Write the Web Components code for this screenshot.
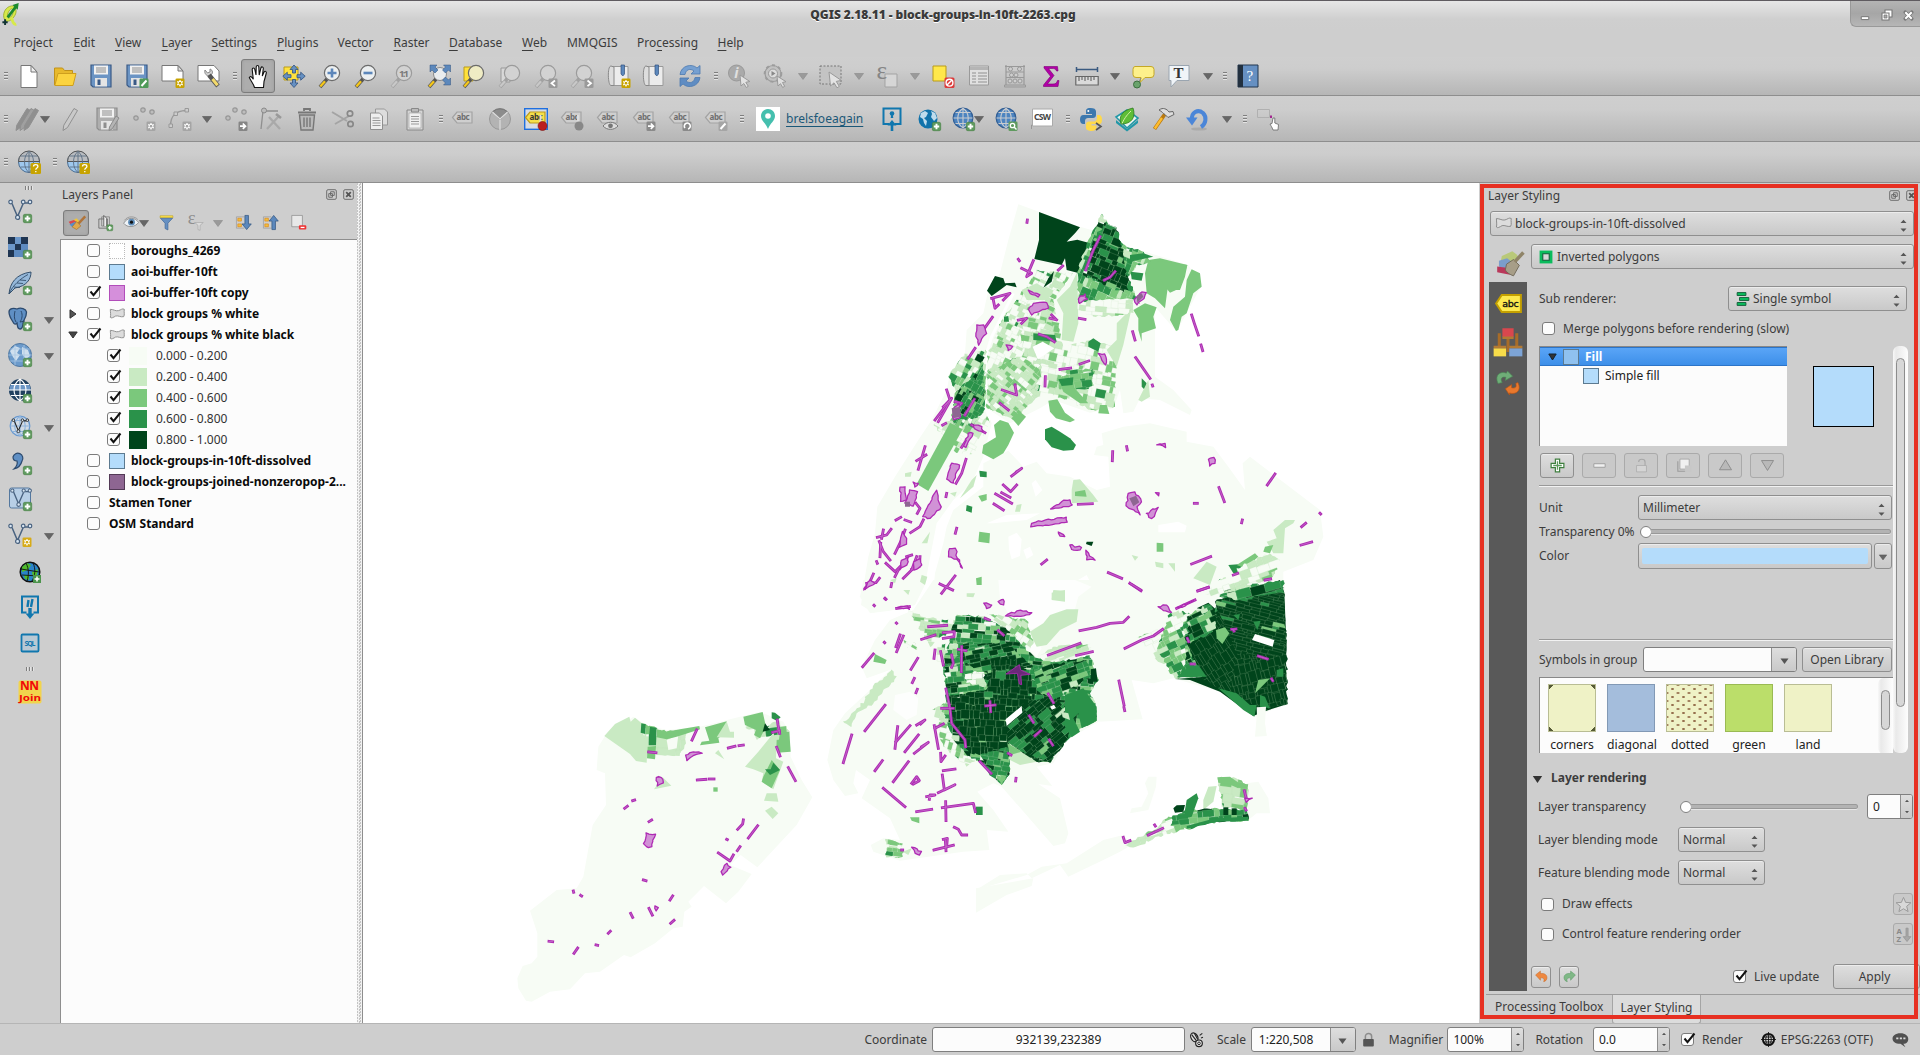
<!DOCTYPE html>
<html lang="en">
<head>
<meta charset="utf-8">
<title>QGIS 2.18.11 - block-groups-in-10ft-2263.cpg</title>
<style>
html,body{margin:0;height:100%;overflow:hidden;background:#cecece}
</style>
</head>
<body>
<qgis-app></qgis-app>
<script>
function define(name, css, html, after) {
  customElements.define(name, class extends HTMLElement {
    connectedCallback() {
      if (this.shadowRoot) return;
      const root = this.attachShadow({ mode: 'open' });
      root.innerHTML = `<style>*{box-sizing:border-box}:host{box-sizing:border-box}${css}</style>` + html(this);
      if (after) after(this, root);
    }
  });
}

/* ---------- icons, on a 24 x 24 grid ---------- */
const plus = `<rect x="15.3" y="15.3" width="8.4" height="8.4" rx="1.5" fill="#5f9a5f" stroke="#43803f" stroke-width=".6"/><path d="M19.5 16.8v5.4M16.8 19.5h5.4" stroke="#fff" stroke-width="1.9"/>`;
const badge = (c, d) => `<rect x="14.5" y="14.5" width="9" height="9.5" rx="1.3" fill="${c}"/>${d}`;
const sun = c => badge(c, `<path d="M19 16v6.5M16.2 17.6l5.6 3.3M21.8 17.6l-5.6 3.3" stroke="#fff" stroke-width="1.2"/><circle cx="19" cy="19.2" r="1.9" fill="${c}" stroke="#fff"/>`);
const lens = (inner, g) => `<path d="M2 23L9 15" stroke="${g ? '#a2a2a2' : '#555'}" stroke-width="3.6"/><path d="M2.3 22.6L7 17.2" stroke="${g ? '#c8c8c8' : '#f5c71a'}" stroke-width="2.3"/><circle cx="14" cy="9" r="7.6" fill="${g ? '#d2d2d2' : '#eceff0'}" stroke="${g ? '#9b9b9b' : '#6b6b6b'}" stroke-width="1.2"/>${inner}`;
const vec = c => `<path d="M4 4.5L9.5 17.5L15 5M17 4h4" stroke="${c}" stroke-width="1.5"/><g fill="#d9e6f2" stroke="${c}" stroke-width="1.2"><circle cx="2.6" cy="3" r="1.8"/><circle cx="15.2" cy="3" r="1.8"/><circle cx="22" cy="3" r="1.8"/><circle cx="9.6" cy="18.4" r="2"/></g>`;
const tag = (extra, fill = '#cfcfcf', st = '#a3a3a3', tx = '#6e6e6e') => `<path d="M1.5 10.500L6 5h15v11H6z" fill="${fill}" stroke="${st}" stroke-width="1.2"/><text x="5.600" y="13.400" font-size="8" font-weight="700" fill="${tx}" textLength="13">abc</text>${extra}`;
const globe = (extra, st = '#44607c', a = '#b7cfe6', b = '#e4edf5') => `<circle cx="12" cy="11" r="9.8" fill="${a}" stroke="${st}" stroke-width="1.3"/><path d="M2.500 11h19M4.500 5.500h15M4.500 16.500h15M12 1.200v19.600M12 1.200c-7 5-7 15 0 19.600M12 1.200c7 5 7 15 0 19.600" stroke="${b}" stroke-width="1.100"/>${extra}`;
const qglobe = `<circle cx="11" cy="12" r="10.500" fill="#9ec8ee" stroke="#4a6d92"/><path d="M.5 11.500a10.500 10.500 0 0 1 21 0z" fill="#b9bcc0" stroke="#555"/><path d="M2.500 6h17M2.500 17h17M11 1.500v21M11 1.500c-6 4-6 17 0 21M11 1.500c6 4 6 17 0 21" stroke="#5c6f84" stroke-width=".9"/>` + `<rect x="12.500" y="13" width="10.500" height="11" rx="1.500" fill="#c7a300"/><path d="M15.500 16.500c0-2.400 4.400-2.400 4.400 0 0 1.600-2.100 1.400-2.100 3.200m0 1.200v1.400" stroke="#fff" stroke-width="1.300"/>`;
const pencil = (g, x = 0) => `<path d="M${15 + x} 1.500l3.500 2L${8.500 + x} 20.500l-4.500 3 .8-5.300z" fill="${g}" stroke="#909090"/>`;
const dots = `<g fill="#bdbdbd" stroke="#979797" stroke-width="1.200"><circle cx="11" cy="3" r="2.200"/><circle cx="20" cy="5" r="2.200"/><circle cx="4" cy="11" r="2.200"/></g>`;
const save = (c, l) => `<path d="M2 1h20v22H4l-2-2z" fill="${c}" stroke="${l}" stroke-width="1.200"/><path d="M5 1.500h14v9H5z" fill="#f1f1f1"/><path d="M7 4h10M7 6h10M7 8h10" stroke="#8d8d8d"/><path d="M6 14h12v8.500H6z" fill="#e4e4e4"/><path d="M8.500 15.500h3v5.500h-3z" fill="${l}"/>`;
const arrowD = c => `<path d="M7.500 9.500h9L12 15.500z" fill="${c}" stroke="#555" stroke-width=".6"/>`;
const ICONS = {
  grip: `<path d="M10 8.500h4M10 11.500h4M10 14.500h4" stroke="#7e7e7e"/><path d="M10 9.500h4M10 12.500h4M10 15.500h4" stroke="#e4e4e4"/>`,
  vgrip: `<path d="M8.500 10v4M11.500 10v4M14.500 10v4" stroke="#7e7e7e"/><path d="M9.500 10v4M12.500 10v4M15.500 10v4" stroke="#e4e4e4"/>`,
  dd: arrowD('#666'), ddg: `<path d="M7.500 9.500h9L12 15.500z" fill="#9a9a9a" stroke="#8a8a8a" stroke-width=".6"/>`,
  new: `<path d="M4 1.500h10L20 8v15.500H4z" fill="#fff" stroke="#777"/><path d="M14 1.500V8h6z" fill="#eee" stroke="#777"/>`,
  open: `<path d="M1.500 21V4h8l2 2.500h8V10" fill="#e8b92c" stroke="#c0921a"/><path d="M1.800 21.500L5 9.500h18L20 21.500z" fill="#fbd33f" stroke="#cf9f1d"/>`,
  save: save('#6b94c4', '#3a5a86'),
  saveas: save('#6b94c4', '#3a5a86') + badge('#4f9a58', `<path d="M16.500 22l5-5.500" stroke="#fff" stroke-width="2"/>`),
  newprint: `<path d="M1 1.500h16L22 7v10H1z" fill="#fff" stroke="#777"/><path d="M17 1.500V7h5z" fill="#ddd" stroke="#777"/>` + sun('#c7a300'),
  composer: `<path d="M1 1.500h16L22 7v10H1z" fill="#fff" stroke="#777"/><path d="M8 6l2.500 3 2.500-1V5c3 1 3.500 5 0 6.500-3.500 1-6-2-5-5.500z" fill="#d5d5d5" stroke="#888"/><path d="M12 11l9 11" stroke="#555" stroke-width="4.500"/><path d="M15.500 15l5 6.300" stroke="#f2d96b" stroke-width="3"/>`,
  pan: `<path d="M8.500 23.500c-1-4-4-7-5.200-10 .9-1.800 2.600-.5 4 1.700L6.200 5.500c0-2 2.200-2 2.600 0L10 11l.2-8c.2-2 2.500-2 2.600 0l.4 8 1.700-7c.6-1.800 2.600-1.200 2.400.6L16.300 12l1.800-4c.9-1.400 2.500-.6 2.200 1-1 4-1.500 6-2.300 8.500L17.500 23.500z" fill="#fff" stroke="#111" stroke-width="1.100"/>`,
  pansel: `<path d="M2 3h14v13H2z" fill="#ffe23f" stroke="#b99b1b"/><g fill="#6690c2" stroke="#30527f" stroke-width=".8"><path d="M12 1l4 4.500h-2.500V9h-3V5.500H8zM12 23.500l4-4.500h-2.500v-3.500h-3V19H8zM.8 12.200l4.500-4v2.500H9v3H5.300v2.500zM23.200 12.200l-4.500-4v2.500H15v3h3.700v2.500z"/></g>`,
  zin: lens(`<path d="M14 4.500v9M9.500 9h9" stroke="#5c86ba" stroke-width="2.600"/>`),
  zout: lens(`<path d="M9.500 9h9" stroke="#5c86ba" stroke-width="2.600"/>`),
  z11: lens(`<text x="9" y="12.800" font-size="9.500" font-weight="700" fill="#7a7a7a" textLength="10">1:1</text>`, 1),
  zfull: `<path d="M2 23L9 15" stroke="#555" stroke-width="3.600"/><path d="M2.300 22.600L7 17.200" stroke="#f5c71a" stroke-width="2.300"/><circle cx="13" cy="10" r="6.500" fill="#e9ecee" stroke="#8a8a8a"/><g fill="#5c88bc" stroke="#30527f" stroke-width=".5"><path d="M3 1h7L8 3l3 3-3 3-3-3-2 2zM23.500 1v7l-2-2-3 3-3-3 3-3-2-2zM23.500 21h-7l2-2-3-3 3-3 3 3 2-2z"/></g>`,
  zsel: `<path d="M2 3h9v14H2z" fill="#ffe13a" stroke="#b99b1b"/>` + lens('').replace(/#eceff0/, '#efecc4'),
  zlay: `<path d="M3 4h9v14H3z" fill="#d8d8d8" stroke="#999"/>` + lens('', 1),
  zlast: lens('', 1) + badge('#9a9a9a', `<path d="M21 16.500l-3.500 2.800 3.500 2.800" stroke="#fff" stroke-width="1.800"/>`),
  znext: lens('', 1) + badge('#9a9a9a', `<path d="M17.500 16.500l3.500 2.800-3.500 2.800" stroke="#fff" stroke-width="1.800"/>`),
  bmnew: `<path d="M4 2.500h17v19H4z" fill="#ececec" stroke="#999"/><path d="M4 2c-4 0-3 20 0 19.500h3V3z" fill="#ddd" stroke="#888"/><path d="M14 1h3.500v9l-1.700 2-1.800-2z" fill="#5c88bc" stroke="#30527f" stroke-width=".7"/>` + sun('#c7a300'),
  bm: `<path d="M4 2.500h17v19H4z" fill="#ececec" stroke="#999"/><path d="M4 2c-4 0-3 20 0 19.500h3V3z" fill="#ddd" stroke="#888"/><path d="M13 1h3.500v9l-1.700 2-1.800-2z" fill="#5c88bc" stroke="#30527f" stroke-width=".7"/>`,
  refresh: `<path d="M2 10.500C3 1.500 14-1 19 4l3-2.500v8.500h-9l3-3c-4-3-8-1.500-9 3.500z" fill="#76a0d1" stroke="#4d7ab0" stroke-width=".8"/><path d="M22 13.500c-1 9-12 11.500-17 6.500l-3 2.500V14h9l-3 3c4 3 8 1.500 9-3.500z" fill="#5f8cc2" stroke="#4d7ab0" stroke-width=".8"/>`,
  info: `<circle cx="9.500" cy="9" r="8" fill="#aaa" stroke="#999"/><text x="7.300" y="14" font-size="14" font-style="italic" font-weight="700" fill="#e0e0e0">i</text><path d="M13 11l1 11 2.800-2.500 2.500 4 2-1.200-2.500-4 4-.8z" fill="#e2e2e2" stroke="#999"/>`,
  gear: `<circle cx="10" cy="9.500" r="8" fill="#c2c2c2" stroke="#9c9c9c" stroke-width="1.200"/><circle cx="10" cy="9.500" r="8.300" stroke="#9c9c9c" stroke-width="2" stroke-dasharray="3 3.300"/><circle cx="10" cy="9.500" r="4.500" fill="#ddd" stroke="#999"/><path d="M8.500 7v5l4-2.500z" fill="#888"/><path d="M14 12l1 10 2.500-2.300 2.200 3.800 2-1.200-2.200-3.800 3.500-.8z" fill="#dedede" stroke="#999"/>`,
  select: `<path d="M1 2h21v18H1z" fill="#c3c3c3" stroke="#777" stroke-dasharray="2 1.500"/><path d="M10 8l1.500 14 3.500-3.200 3 5 2.300-1.400-3-5 5-1z" fill="#e3e3e3" stroke="#999"/>`,
  eps: `<path d="M10 10h12v13H10z" fill="#d6d6d6" stroke="#a3a3a3"/><text x="1.500" y="15" font-size="25" font-family="Liberation Serif" fill="#858585">ε</text>`,
  desel: `<path d="M2 2h13v15H2z" fill="#ffe84b" stroke="#b99b1b"/><rect x="13.500" y="13.500" width="10" height="10.500" rx="1.500" fill="#dc3b3b"/><circle cx="18.500" cy="18.700" r="3.400" stroke="#fff" stroke-width="1.400"/><path d="M16 21l5-5" stroke="#fff" stroke-width="1.400"/>`,
  table: `<path d="M2.500 2h19v19h-19z" fill="#e0e0e0" stroke="#9a9a9a"/><path d="M3 3h18v3H3z" fill="#b5b5b5"/><path d="M5 9h4M5 12h4M5 15h4M5 18h4M11 9h9M11 12h9M11 15h9M11 18h9" stroke="#aaa" stroke-width="1.600"/>`,
  abacus: `<path d="M3 1v20M21 1v20M2 2.500h20M3 8h18M3 13.500h18" stroke="#999" stroke-width="1.200"/><path d="M1.500 21h21v2h-21z" fill="#bbb" stroke="#999"/><g fill="#cfcfcf" stroke="#999"><circle cx="7.500" cy="5" r="2"/><circle cx="16.500" cy="5" r="2"/><circle cx="8.500" cy="11" r="2"/><circle cx="13" cy="11" r="2"/><circle cx="7" cy="17" r="2"/><circle cx="12" cy="17" r="2"/><circle cx="17" cy="17" r="2"/></g>`,
  sigma: `<path d="M5 2.500h13.500l.5 4.500h-1.500C17 5 15.500 4.500 13 4.500H9.500l5.500 7-6.500 8.500H14c3 0 3.700-1 4.500-3.500H20l-1 6H4.500v-1.500l7-8.700L5 4z" fill="#b100a6" stroke="#7a0073" stroke-width=".6"/>`,
  ruler: `<path d="M1.500 5.500h21M1.500 3v5M22.500 3v5" stroke="#3a5a80" stroke-width="1.500"/><path d="M.8 12.500h22.400v8.500H.8z" fill="#dadada" stroke="#666" stroke-width="1.200"/><path d="M4 13v4M7 13v3M10 13v4M13 13v3M16 13v4M19 13v3" stroke="#555"/>`,
  tip: `<path d="M4 2.500h16q3 0 3 3v5q0 3-3 3h-6l-5 5 1-5H5q-3 0-3-3v-5q0-3 2-3z" fill="#fdf08b" stroke="#c4a726"/><path d="M10 14L7 20" stroke="#888"/><circle cx="6" cy="20.500" r="3.500" fill="#6aa36c" stroke="#3c6f3f"/>`,
  textann: `<path d="M2 1.500h20v15H10l-6 6.500v-6.500H2z" fill="#f0f4f8" stroke="#9aa5b0"/><text x="6.500" y="14" font-size="15" font-family="Liberation Serif" font-weight="700" fill="#333">T</text>`,
  help: `<path d="M2 1h20v22H2z" fill="#6690c2" stroke="#23364e"/><path d="M2 1h5v22H2z" fill="#22303f"/><text x="10.500" y="17" font-size="15" font-family="Liberation Serif" fill="#fff">?</text>`,
  pencils: pencil('#8f8f8f', -4) + pencil('#a0a0a0', 0) + pencil('#8f8f8f', 4),
  pencil: pencil('#c9c9c9', 1),
  saveg: save('#aeaeae', '#8e8e8e') + `<path d="M21 9l3 2-7 11-3 1.500.5-3.500z" fill="#b5b5b5" stroke="#8b8b8b"/>`,
  dotsun: dots + sun('#a5a5a5'),
  curve: `<path d="M2.500 19C2.500 8 8 4 18 3.500" stroke="#9a9a9a" stroke-width="1.500"/><g fill="#ccc" stroke="#999"><path d="M1 17h3.500v3.500H1zM6 5h3.500v3.500H6zM17 1.500h3.500V5H17z"/></g>` + sun('#a5a5a5'),
  dotarrow: dots + badge('#858585', `<path d="M16 19.200h5M18.800 16.500l2.700 2.700-2.700 2.700" stroke="#fff" stroke-width="1.700"/>`),
  node: `<path d="M4 4L2 22M6 4h13" stroke="#8f8f8f" stroke-width="1.300"/><circle cx="5" cy="3.500" r="2.500" fill="#bbb" stroke="#888"/><path d="M8 22L20 9M10 10l11 12" stroke="#a9a9a9" stroke-width="2.300"/><path d="M17 7l5 4" stroke="#999" stroke-width="2.600"/>`,
  trash: `<path d="M4.500 8h15l-1.500 15H6z" fill="#b9b9b9" stroke="#777" stroke-width="1.400"/><path d="M3 5.500h18M9 4V2h6v2" stroke="#777" stroke-width="1.800"/><path d="M9 10.500v9.500M12 10.500v9.500M15 10.500v9.500" stroke="#777" stroke-width="1.400"/>`,
  cut: `<path d="M1 5l15 9M4 17l14-8" stroke="#a4a4a4" stroke-width="2"/><circle cx="19" cy="6.500" r="2.700" stroke="#888" stroke-width="1.700"/><circle cx="19.500" cy="17" r="2.700" stroke="#888" stroke-width="1.700"/>`,
  copy: `<path d="M8.500 2h9l3 3v13h-12z" fill="#ddd" stroke="#999"/><path d="M3.500 6h9l3 3v13.500h-12z" fill="#eee" stroke="#8f8f8f"/><path d="M5.500 11h7M5.500 13.500h8M5.500 16h8M5.500 18.500h8" stroke="#999"/>`,
  paste: `<path d="M4 3h16v20H4z" fill="#d5d5d5" stroke="#888"/><path d="M6 6h12v15H6z" fill="#f0f0f0" stroke="#aaa" stroke-width=".7"/><path d="M8.500 1.500h7V5h-7z" fill="#bbb" stroke="#888"/><path d="M8 9.500h8M8 12h8M8 14.500h8M8 17h8" stroke="#999"/>`,
  abc: tag(''),
  pie: `<circle cx="12" cy="12" r="10.500" fill="#b3b3b3" stroke="#999"/><path d="M12 13L5 4.500a10.500 10.500 0 0 1 14 0z" fill="#8c8c8c" stroke="#777"/><path d="M12 12v11M12 12L4.500 5M12 12l7.500-7" stroke="#ddd" stroke-width="1.200"/>`,
  abchl: `<rect x=".7" y="1.700" width="22.600" height="20.600" fill="#d8dce2" stroke="#1e6fe0" stroke-width="1.400"/>` + tag('', '#f5e04a', '#bd9a1d', '#333') + `<path d="M16.500 8v8" stroke="#ddd" stroke-width="2"/><circle cx="18.500" cy="19" r="4.500" fill="#bb1f1f" stroke="#7b1010" stroke-width=".6"/>`,
  abcpin: tag(`<path d="M18 8v8" stroke="#ddd" stroke-width="2"/><circle cx="19" cy="19" r="4.500" fill="#888"/>`),
  abceye: tag(`<path d="M7 19c4-5 11-5 15 0-4 4.500-11 4.500-15 0z" fill="#ddd" stroke="#777"/><circle cx="14.500" cy="18.800" r="2.400" fill="#777"/>`),
  abcmove: tag(badge('#8a8a8a', `<path d="M16 19.200h5M18.800 16.500l2.700 2.700-2.700 2.700" stroke="#fff" stroke-width="1.700"/>`)),
  abcrot: tag(badge('#8a8a8a', `<path d="M17 21a3 3 0 1 1 3 1" stroke="#fff" stroke-width="1.600"/>`)),
  abcedit: tag(badge('#a5a5a5', `<path d="M16.500 22l5-5.500" stroke="#fff" stroke-width="2"/>`)),
  pin: `<rect width="24" height="24" fill="#fff"/><path d="M12 2c4 0 7 3 7 7 0 5-5 7-7 13C10 16 5 14 5 9c0-4 3-7 7-7z" fill="#45bfae"/><circle cx="12" cy="9" r="2.800" fill="#fff"/>`,
  dl: `<path d="M9.500 17H3.500V1.500h17V17h-6" stroke="#1077ae" stroke-width="2"/><path d="M12 24v-7" stroke="#1077ae" stroke-width="2.600"/><path d="M7.500 18.500L12 13l4.500 5.500z" fill="#1077ae"/><circle cx="12" cy="6.500" r="2.300" fill="#1077ae"/><path d="M11.300 7h1.400l.6 4h-2.600z" fill="#1077ae"/>`,
  cglobe: `<circle cx="11" cy="12" r="9.500" fill="#1173ab"/><path d="M4 6l4-2 3 2-2 4-2 1 3 3-1 5-2-3-1-4-3-2zM14 4l4 2 2 5-3 3-3-4 1-3z" fill="#bfdced"/>` + plus,
  bglobe: globe(plus, '#315e94', '#4d84c0', '#c9ccd0'),
  sglobe: globe(badge('#5f9a5f', `<circle cx="18.500" cy="18.500" r="2.200" stroke="#fff" stroke-width="1.300"/><path d="M20 20l2.500 2.500" stroke="#fff" stroke-width="1.400"/>`), '#315e94', '#4d84c0', '#c9ccd0'),
  csw: `<path d="M1.500 22V18h10" stroke="#999"/><path d="M2.500 2h20v17h-20z" fill="#fff" stroke="#aaa"/><text x="4" y="13.200" font-size="8.500" font-weight="700" fill="#444" textLength="17">CSW</text>`,
  python: `<path d="M11.500 1C7 1 7 3 7 4.500V7h6v1H4.500C2 8 1 10 1 12.500S2 17 4.500 17H6v-3c0-2 1.500-3 3-3h5c1.700 0 3-1 3-3V4.500C17 2 15 1 11.500 1z" fill="#3d78ae"/><circle cx="9.300" cy="4" r="1" fill="#fff"/><path d="M18 8v3c0 2-1.500 3.500-3 3.500h-5c-1.500 0-3 1-3 3V21c0 2 3 3 5.500 3s5-1 5-3v-2.500h-5V17H20c2.500 0 3-2 3-4.500S22 8 20 8z" fill="#ffd94a"/><path d="M17 16l5 3.500-5 3.500" stroke="#555" stroke-width="1.600"/>`,
  leaf: `<path d="M1 13l11 9 11-9v3l-11 8.500L1 16z" fill="#2298a8"/><path d="M1 10l11-7 11 8-11 10z" fill="#e8f4ef" stroke="#2298a8" stroke-width="1.600"/><path d="M6 17C3 8 9 3 18 1c3 9-1 16-12 16z" fill="#5ebd37" stroke="#2f7b20" stroke-width=".8"/><path d="M7 16.500C10 10 13 7 16 4" stroke="#d8f0a8"/>`,
  hammer: `<path d="M3.500 22L14 7" stroke="#b97a10" stroke-width="3.800"/><path d="M3.800 21.500L11 11" stroke="#ffbd2e" stroke-width="2.300"/><path d="M8 3c4-3 8-1 10 2l4-.5 1 3-6 3-3-3c-2-1-3-3-6-4.500z" fill="#ddd" stroke="#666"/>`,
  undo: `<ellipse cx="13" cy="22" rx="8" ry="1.600" fill="#aaa"/><path d="M6 13C5 5 12 2 17 6c4 4 3 11-2 14" stroke="#4b86d8" stroke-width="4"/><path d="M0 10.500h11.500L6 18.500z" fill="#4b86d8"/>`,
  selhand: `<path d="M1.500 2.500h12v8h-12z" stroke="#b0b0b0"/><path d="M15 11V8.500" stroke="#a3278f" stroke-width="2"/><path d="M17 23c-1-3-2-4-3-6l2-.500 1-5.500h1.800v5l3.700 1.500L22 23z" fill="#fff" stroke="#666" stroke-width=".8"/>`,
  qglobe,
  vec: vec('#4a6380') + plus, vecstar: vec('#4a6380') + sun('#d7ab18'),
  raster: `<path d="M0 2h20v20H0z" fill="#5d8ac0"/><path d="M0 2h7v7H0zM13 2h7v7h-7zM7 9h6v6H7zM0 15h6v7H0z" fill="#1f3552"/><path d="M7 2h6v7H7zM0 9h7v6H0z" fill="#6b97ca"/>` + plus,
  feather: `<path d="M1 23C2 12 8 3 23 1c0 7-4 14-16 16z" fill="#95b8da" stroke="#35506c"/><path d="M1 23C5 14 12 8 20 3.500M9 12l6 .500M12 9l6 .500M6 16l6 .500" stroke="#35506c" stroke-width=".9"/>` + plus,
  pg: `<path d="M1 5c0-4 5-4 8-3 4-2 9 0 9.500 3 0 5-2 7-3 9-1 3 0 8-3.500 8-3 0-2.500-4-3-6-2 2-3 1-4-1C3 12 1 8 1 5z" fill="#5f8fc4" stroke="#2c4a6e" stroke-width="1.300"/><path d="M7 4c-1 4-1 8 1 11M13 4c2 4 1 8-1 11M12 15l5-1" stroke="#2c4a6e"/>` + plus,
  sglobe2: `<circle cx="12" cy="12" r="11.500" fill="#6b9acb" stroke="#50779f"/><path d="M2 8l5-5 5 2-3 5 3 2-4 6-3-4zM14 4l6 3 2 6-4 3-4-5z" fill="#cfdfee"/><path d="M0 12h24M2 6h20M2 18h20M7 2v20M16 2v20" stroke="#aac6e2" stroke-width=".8"/>` + plus,
  wglobe: `<circle cx="12" cy="11" r="11" fill="#21405f"/><path d="M3 5.500h18c2 2 2 8 0 10.500H3c-2-2-2-8 0-10.500z" fill="#6c96c5"/><path d="M1 11h22v5H2z" fill="#21405f"/><path d="M1 11h22M3 5.500h18M3 16.500h18M12 0v22M12 0C4 6 4 16 12 22M12 0c8 6 8 16 0 22" stroke="#fff" stroke-width="1.100"/>` + plus,
  vglobe: globe('<g transform="translate(3.500 3) scale(.72)">' + vec('#222') + '</g>', '#6a9ad0', '#d2dbe5', '#8db3dc') + plus,
  comma: `<path d="M5 6a5 5 0 1 1 9 4c-1 4-4 7-8 8 3-3 4-5 3-8-2 0-4-1-4-4z" fill="#5f8fc4" stroke="#2c4a6e" stroke-width="1.200"/>` + plus,
  vbox: `<rect x="1.500" y="1" width="21" height="20" rx="2" fill="#b8cfe6" stroke="#54789f"/>` + '<g transform="translate(2 1) scale(.9)">' + vec('#4a6380') + '</g>' + plus,
  ol: `<circle cx="12" cy="12" r="9.800" fill="#2a84c8" stroke="#111" stroke-width="1.500"/><path d="M4 7l5-4 4 2-3 5-6 2zM14 12l6-3-1 6-4 3zM6 15l5 0 0 5-4-1z" fill="#50bb2c"/><path d="M3 9l18 3M4 15l17 1M8 3c3 6 3 12 1 18M15 3c3 6 2 13-1 18" stroke="#111" stroke-width=".9"/><rect x="15" y="15" width="8" height="8" fill="#4c944c"/><path d="M19 16.500v5M16.500 19h5" stroke="#fff" stroke-width="1.500"/>`,
  down: `<path d="M8.500 17.500H4V1.500h16v16h-4.500" stroke="#1077ae" stroke-width="2"/><path d="M12 13v8" stroke="#1077ae" stroke-width="3.400"/><path d="M7.500 18.500h9L12 24z" fill="#1077ae"/><path d="M10.500 5l-1 7M14.500 4l-1.500 8" stroke="#1077ae" stroke-width="2.400"/>`,
  sql: `<rect x="3.500" y="3.500" width="17" height="17" rx="1" fill="#b9c9d4" stroke="#1077ae" stroke-width="1.800"/><text x="6.500" y="14.500" font-size="7" font-weight="700" fill="#1077ae" textLength="11">SQL</text>`,
  nn: `<rect x=".5" y=".5" width="23" height="23" rx="2" fill="#f1d44d"/><text x="2" y="10" font-size="12" font-weight="700" fill="#f00808" textLength="19">NN</text><text x="1" y="21.300" font-size="9.500" font-weight="700" fill="#f00808" textLength="22" lengthAdjust="spacingAndGlyphs">Join</text>`,
  brush: `<path d="M4 12l8-5 5 5-8 6z" fill="#efc43a"/><path d="M3 11l6-2 3 2-7 3z" fill="#d9484d"/><path d="M4 14l7-3 2 2-6 4z" fill="#578ecb"/><path d="M12 11l5 5-5 4-5-3z" fill="#e0a94c" stroke="#a36f2a" stroke-width=".7"/><path d="M14.500 13L22 5" stroke="#b0743a" stroke-width="2.800"/>`,
  addgrp: `<path d="M4 7h12v13H4z" stroke="#555"/><path d="M8 4h11v13H8z" stroke="#777"/><path d="M11 17V2l4 4v11" fill="#eee" stroke="#444"/>` + plus,
  eye: `<path d="M1 13C6 4 17 4 22 12c-5 7-16 8-21 1z" fill="#eef3f7" stroke="#777"/><circle cx="12" cy="11.500" r="4.800" fill="#5f8db8"/><circle cx="12" cy="11.500" r="2.200" fill="#111"/><path d="M2 9C7 2 17 3 21 8" stroke="#888"/>`,
  filter: `<path d="M3 2.500h18v3H3z" fill="#ffe34a" stroke="#b99b1b" stroke-width=".8"/><path d="M3.500 6h17l-6.500 7v9.500l-4-2V13z" fill="#6690c2" stroke="#41699a"/>`,
  epsf: `<text x="1" y="14" font-size="26" font-family="Liberation Serif" fill="#8f8f8f">ε</text><path d="M11 12h12l-4.500 4v7l-3-1v-6z" fill="#dcdcdc" stroke="#aaa"/>`,
  expand: `<path d="M2 4h11M2 20h11M2 4v16" stroke="#999"/><path d="M4 6h5v4H4zM4 14h5v4H4z" fill="#f0c040" stroke="#e08a18"/><path d="M14 2h5v12h4l-6.500 8-6.500-8h4z" fill="#5c88bc" stroke="#2f5480"/>`,
  collapse: `<path d="M2 4h11M2 20h11M2 4v16" stroke="#999"/><path d="M4 6h5v4H4zM4 14h5v4H4z" fill="#f0c040" stroke="#e08a18"/><path d="M14 22h5V10h4l-6.500-8L10 10h4z" fill="#5c88bc" stroke="#2f5480"/>`,
  remove: `<path d="M2.500 2h15v16h-15z" fill="#e8e8e8" stroke="#888"/><rect x="12.500" y="16" width="10.500" height="6" rx="1.500" fill="#e33"/><path d="M15 19h5.500" stroke="#fff" stroke-width="1.800"/>`,
  poly: `<path d="M2 5c5 0 8 3 12 2 4-1 6-4 9-2-1 4 1 8-1 11-5 1-8-2-12-1-3 2-7 4-8 2 1-4 0-7 0-12z" fill="#dcdcdc" stroke="#8c8c8c" stroke-width="1.400"/>`,
  inv: `<path d="M1 1h22v22H1z" fill="#0abb5c"/><path d="M6.500 6.500h11v11h-11z" fill="#d6d6d6" stroke="#145c3a" stroke-width="1.800"/>`,
  single: `<g fill="#0abb5c" stroke="#145c3a" stroke-width="1.600"><path d="M2 1h15v5H2zM6 9.500h16v5H6zM2 18h15v5H2z"/></g>`,
  style: `<path d="M5 6l9-4 4 3 2 4-8 6-8-4z" fill="#b9c979"/><path d="M2.500 10l7-2 4 3-6 6-5-2z" fill="#7b9dcb"/><path d="M1 15l8 1 3 6-11-2z" fill="#b9385a"/><path d="M9 13l6-4 5 5-5 9c-3-1-6-3-7-5z" fill="#a79e88" stroke="#6f6757" stroke-width=".8"/><path d="M16 11l7.500-8" stroke="#8f8468" stroke-width="3"/>`,
  label: `<path d="M1 12L6 4.500h17v15H6z" fill="#fce94f" stroke="#c4a000" stroke-width="1.800"/><text x="6.500" y="15" font-size="8.500" font-family="DejaVu Sans" fill="#111" stroke="#111" stroke-width=".3" textLength="14.500">abc</text>`,
  masks: `<path d="M5 5v12M12 8v12M19 5v12" stroke="#a86c28" stroke-width="2.400"/><path d="M7.500 1h9v7h-9z" fill="#d9474e"/><path d="M.5 17h10v6.500H.5z" fill="#f8dc4a"/><path d="M13 17h10.500v6.500H13z" fill="#7da4d6"/><path d="M.5 16h10M13 16h10.500M7.500 8.500h9" stroke="#b27a34" stroke-width="2"/>`,
  hist: `<path d="M2 13C-2 4 5 1 10 3l1-2 5 5-7 4 .500-3C5 6 4 9 6 12z" fill="#6fae78" stroke="#4a8a55" stroke-width=".6"/><path d="M21 12c4 8-2 12-8 10v2l-4-6 6-4v3c4 1 5-1 4-4z" fill="#e8782d" stroke="#bb5312" stroke-width=".6"/>`,
  add: `<path d="M9 3h6v6h6v6h-6v6H9v-6H3V9h6z" fill="#fff" stroke="#3f7f3f" stroke-width="1.700"/><path d="M12 6v12M6 12h12" stroke="#5f9a5f" stroke-width="1.800"/>`,
  minus: `<path d="M4 9.500h16v5H4z" fill="#f0f0f0" stroke="#a0a0a0" stroke-width="1.400"/>`,
  lock: `<path d="M5 12h14v9H5z" fill="#d5d5d5" stroke="#a8a8a8"/><path d="M8 7c0-5 9-5 9 0v5" stroke="#a8a8a8" stroke-width="1.600"/>`,
  dup: `<path d="M4 6v14h12" stroke="#9a9a9a" stroke-width="1.500"/><path d="M7 3h13v14H7z" fill="#f0f0f0" stroke="#9a9a9a"/><path d="M14 12h9v9h-9z" fill="#c7c7c7"/>`,
  up: `<path d="M12 4l8.500 14h-17z" fill="#b9b9b9" stroke="#8a8a8a" stroke-width="1.300"/>`,
  dn: `<path d="M12 19L20.500 5h-17z" fill="#b9b9b9" stroke="#8a8a8a" stroke-width="1.300"/>`,
  star: `<path d="M12 2l3 7 7.500.500-6 5 2 7.500-6.500-4-6.500 4 2-7.500-6-5L9 9z" fill="#d8d8d8" stroke="#9a9a9a" stroke-width="1.400"/>`,
  az: `<text x="2" y="11" font-size="11" font-weight="700" fill="#8a8a8a">A</text><text x="2" y="22" font-size="11" font-weight="700" fill="#8a8a8a">Z</text><path d="M15.500 3h3v12h4L17 22l-5.500-7h4z" fill="#a8a8a8" stroke="#8a8a8a" stroke-width=".8"/>`,
  undo2: `<path d="M1 9l9-7v4.500c8-1 13 3 12 9-1 4-4 6-6 6 2-5 0-7-6-7V19z" fill="#ee8840" stroke="#bd5f1d" stroke-width=".8"/>`,
  redo2: `<path d="M23 9l-9-7v4.500c-8-1-13 3-12 9 1 4 4 6 6 6-2-5 0-7 6-7V19z" fill="#7fb886" stroke="#4f8f5a" stroke-width=".8"/>`,
  mouse: `<ellipse cx="8" cy="8" rx="5" ry="7" transform="rotate(-30 8 8)" fill="#ddd" stroke="#222" stroke-width="1.800"/><path d="M4 4l7 9M8 2l5 9M16 5l4-3M18 9l3-1" stroke="#222" stroke-width="1.700"/><circle cx="15" cy="17" r="5" fill="#e8e8e8" stroke="#222" stroke-width="1.800"/><circle cx="15" cy="17" r="2" stroke="#222" stroke-width="1.400"/>`,
  plock: `<path d="M7 11V7c0-6 10-6 10 0v4" stroke="#8c8c8c" stroke-width="2.400"/><rect x="3.500" y="11" width="17" height="12" rx="1.500" fill="#555"/>`,
  crs: `<circle cx="12" cy="12" r="9" fill="#cfcfcf" stroke="#111" stroke-width="3"/><path d="M12 0v24M0 12h24M12 3c-6 5-6 13 0 18M12 3c6 5 6 13 0 18M4 8h16M4 16h16" stroke="#111" stroke-width="1.400"/>`,
  msg: `<path d="M12 3c14 0 14 15 4 15l3 5-7-5C-3 18-3 3 12 3z" fill="#505050"/><path d="M6 10.500h3M11 10.500h3M16 10.500h3" stroke="#ddd" stroke-width="2.600"/>`,
  qgis: `<path d="M12 3C6 4 3 10 4 15c1 5 5 5 8 2 4-3 6-8 4-12-1-2-2-2-4-2zm0 3c2 0 2 4 1 6s-4 5-5 3 1-8 4-9z" fill="#d7e94a" stroke="#94a51e" stroke-width=".8"/><path d="M12 15c1 4 2 8 5 7" stroke="#d7e94a" stroke-width="3"/><path d="M8 15L18 2" stroke="#1c8a2d" stroke-width="2.800"/><path d="M13 2l6.500-2L18.500 7z" fill="#1c8a2d"/><path d="M2.500 20h5.500M5.300 17v6" stroke="#133" stroke-width="2"/>`,
  float: `<rect x="1.500" y="1.500" width="21" height="21" rx="3" stroke="#666" stroke-width="2"/><path d="M10 6h8v8h-8zM6 10h8v8H6z" stroke="#666" stroke-width="2" fill="#cecece"/>`,
  close: `<rect x="1.500" y="1.500" width="21" height="21" rx="3" stroke="#666" stroke-width="2"/><path d="M7 7l10 10M17 7L7 17" stroke="#555" stroke-width="4"/>`,
  wmin: `<path d="M3 16h18v7H3z" fill="#fff" stroke="#777" stroke-width="2.400"/>`,
  wmax: `<path d="M8 2h14v14H8z" fill="#fff" stroke="#777" stroke-width="2.200"/><path d="M2 8h14v14H2z" fill="#fff" stroke="#777" stroke-width="2.200"/><path d="M6 12h6v6H6z" fill="#aaa" stroke="#777" stroke-width="1.500"/>`,
  wclose: `<path d="M5 5l14 14M19 5L5 19" stroke="#777" stroke-width="8" stroke-linecap="round"/><path d="M5 5l14 14M19 5L5 19" stroke="#fff" stroke-width="4.500"/>`
};
define('qg-icon', ':host{display:block;flex:none;line-height:0}svg{display:block;overflow:visible;font-family:"Noto Sans",sans-serif}',
  el => { const s = el.getAttribute('size') || 24; return `<svg width="${s}" height="${s}" viewBox="0 0 24 24" fill="none">${ICONS[el.getAttribute('name')] || ''}</svg>`; });

/* ---------- controls ---------- */
define('qg-check', `:host{display:flex;align-items:center;white-space:nowrap}
i{width:13px;height:13px;border:1.3px solid #7b7b7b;border-radius:3px;background:#fcfcfc;flex:none;position:relative}
svg{position:absolute;left:1px;top:-2px}span{padding-left:var(--gap,8px)}`,
  el => `<i>${el.hasAttribute('on') ? '<svg width="13" height="13" fill="none"><path d="M1.500 6.500l3 3.700L11.500 1.500" stroke="#111" stroke-width="2"/></svg>' : ''}</i><span><slot></slot></span>`);
define('qg-combo', `:host{display:flex;align-items:center;height:25px;border:1px solid #8f8f8f;border-radius:3px;background:linear-gradient(#dedede,#c9c9c9);box-shadow:inset 0 1px #ececec;padding:0 4px;white-space:nowrap;flex:none}
.t{flex:1;display:flex;align-items:center;gap:var(--g,4px)}svg{margin:4px 2px 0 0}`,
  () => `<span class="t"><slot></slot></span><svg width="7" height="14"><path d="M.5 4L3.500.8L6.500 4zM.5 9.500h6l-3 3.200z" fill="#555"/></svg>`);
define('qg-btn', `:host{display:flex;align-items:center;justify-content:center;height:25px;border:1px solid #8f8f8f;border-radius:3px;background:linear-gradient(#dedede,#c9c9c9);box-shadow:inset 0 1px #ececec;white-space:nowrap;flex:none}
:host([off]){border-color:#aaa;background:#c9c9c9;box-shadow:none}`, () => '<slot></slot>');
define('qg-input', `:host{display:flex;align-items:stretch;height:25px;border:1px solid #7f7f7f;border-radius:3px;background:#fcfcfc;color:#222;white-space:nowrap;flex:none;overflow:hidden}
.t{flex:1;display:flex;align-items:center;padding-left:var(--pl,7px)}.c{justify-content:center;padding:0}
.b{display:flex;align-items:center;justify-content:center;border-left:1px solid #8f8f8f;background:linear-gradient(#dedede,#c9c9c9)}`,
  el => { const k = el.getAttribute('kind');
    return `<div class="t ${k === 'mid' ? 'c' : ''}"><slot></slot></div>` + (k === 'spin' ? '<div class="b" style="width:12px"><svg width="6" height="17"><path d="M1 4L3 1.800L5 4zM1 13h4l-2 2.200z" fill="#555"/></svg></div>' : k === 'drop' ? '<div class="b" style="width:25px"><svg width="9" height="7" style="margin-top:4px"><path d="M.5.500h8L4.500 6z" fill="#555"/></svg></div>' : ''); });
define('qg-slider', `:host{display:flex;align-items:center}i{width:12px;height:12px;border-radius:50%;background:#fff;border:1px solid #808080;flex:none}
b{flex:1;height:5px;margin-left:-1px;border:1px solid #999;border-left:0;border-radius:0 3px 3px 0;background:#b3b3b3;box-shadow:0 1px #e6e6e6}`, () => '<i></i><b></b>');

/* A bar of icons. Each entry is "icon centre width", in the bar's own pixels. */
function spread(list, vertical, start = 0) {
  let end = start;
  return list.map(([n, c, w = 24, extra = '']) => {
    const m = c - w / 2 - end; end = c + w / 2;
    const s = vertical ? `margin-top:${m}px;height:${w}px` : `margin-left:${m}px;width:${w}px`;
    return `<div class="it ${extra}" style="${s}">${n.startsWith('<') ? n : `<qg-icon name="${n}"></qg-icon>`}</div>`;
  }).join('');
}
const BARS = {
  a: [['grip', 6, 8], ['new', 28.6], ['open', 65], ['save', 101], ['saveas', 137.5], ['newprint', 173], ['composer', 209], ['grip', 235, 8], ['pan', 258.500, 34, 'on'], ['pansel', 294], ['zin', 330], ['zout', 366], ['z11', 402], ['zfull', 439.5], ['zsel', 474], ['zlay', 510], ['zlast', 546], ['znext', 582], ['bmnew', 619], ['bm', 653.8], ['refresh', 690], ['grip', 716, 8], ['info', 739], ['gear', 775], ['ddg', 803.5, 12], ['select', 831], ['ddg', 859, 12], ['eps', 887], ['ddg', 915, 12], ['desel', 943.5], ['table', 979], ['abacus', 1015], ['sigma', 1051], ['ruler', 1087], ['dd', 1115, 12], ['tip', 1143], ['textann', 1179], ['dd', 1207.6, 12], ['grip', 1225, 8], ['help', 1248]],
  b: [['grip', 6, 8], ['pencils', 28], ['dd', 44.5, 8], ['pencil', 70], ['saveg', 107], ['dotsun', 143.7], ['curve', 179.6], ['dd', 207, 12], ['dotarrow', 236], ['node', 271.5], ['trash', 307], ['cut', 343], ['copy', 379], ['paste', 414.7], ['grip', 441, 8], ['abc', 463], ['pie', 500], ['abchl', 536], ['abcpin', 572], ['abceye', 608], ['abcmove', 644], ['abcrot', 680], ['abcedit', 716], ['grip', 742, 8], ['pin', 768], ['<span class="user">brelsfoeagain</span>', 824.7, 77], ['dl', 892], ['cglobe', 929], ['bglobe', 963.500], ['dd', 979.5, 8], ['sglobe', 1006], ['csw', 1042], ['grip', 1068, 8], ['python', 1091], ['leaf', 1127], ['hammer', 1163], ['undo', 1198.500], ['dd', 1227.500, 12], ['grip', 1245, 8], ['selhand', 1268]],
  c: [['grip', 6, 8], ['qglobe', 30.4], ['grip', 55, 8], ['qglobe', 79.4]]
};
const itemCss = '.it{flex:none;display:flex;align-items:center;justify-content:center}.on{border:1px solid #7c7c7c;border-radius:3px;background:#adadad;box-shadow:inset 0 0 3px #999}';
define('qg-toolbar', `:host{display:flex;align-items:center;border-bottom:1.500px solid #8e8e8e;background:linear-gradient(#cfcfcf 0,#cdcdcd 30%,#b6b6b6)}
.it{height:34px}.user{color:#1b5878;text-decoration:underline;text-underline-offset:3px}${itemCss}`, el => spread(BARS[el.getAttribute('bar')]));

define('qg-titlebar', `:host{display:flex;height:29px;align-items:flex-start;border-top:1.500px solid #5f5b60;background:linear-gradient(#e6e6e6,#cfcfcf 65%,#cecece);font-weight:700;color:#3a3a3a;text-shadow:0 1px #fff}
.l{width:200px;padding-top:2px}.r{display:flex;justify-content:space-between;align-items:center;width:70px;height:26px;padding:3px 6px 0 9px;border:1px solid #999;border-width:0 0 1.500px 1.500px;border-radius:0 0 0 6px;background:linear-gradient(#b4b4b4,#a6a6a6 50%,#b6b6b6)}b{flex:1;text-align:center;font-size:12px;line-height:27px;padding-left:10px;letter-spacing:-.05px;margin-right:0;padding-right:166px}`,
  () => `<div class="l"><qg-icon name="qgis" size="23"></qg-icon></div><b style="padding-right:174px">QGIS 2.18.11 - block-groups-in-10ft-2263.cpg</b><div class="r"><qg-icon name="wmin" size="10"></qg-icon><qg-icon name="wmax" size="12"></qg-icon><qg-icon name="wclose" size="11"></qg-icon></div>`);
const MENU = [['Project', 13.500, 3], ['Edit', 73.500, 0], ['View', 115, 0], ['Layer', 161.6, 0], ['Settings', 211.400, 0], ['Plugins', 277, 0], ['Vector', 337.500, 4], ['Raster', 393.500, 0], ['Database', 449, 0], ['Web', 522, 0], ['MMQGIS', 567, -1], ['Processing', 637, 3], ['Help', 717.500, 0]];
define('qg-menubar', ':host{display:flex;height:28px;align-items:center;padding-left:13.500px}span{flex:none}u{text-underline-offset:3px}',
  () => MENU.map(([t, x, u], i) => `<span style="width:${(MENU[i + 1] ? MENU[i + 1][1] : 800) - x}px">${u < 0 ? t : t.slice(0, u) + '<u>' + t[u] + '</u>' + t.slice(u + 1)}</span>`).join(''));

const LEFT = [['vgrip', 188, 6], ['vec', 210.500], ['raster', 247], ['feather', 283], ['pg', 319], ['sglobe2', 355], ['wglobe', 391], ['vglobe', 427], ['comma', 463], ['vbox', 499], ['vecstar', 535], ['ol', 571.500, 24, 'far'], ['down', 607, 24, 'far'], ['sql', 643, 24, 'far'], ['vgrip', 669, 6, 'far'], ['nn', 692, 24, 'far']];
define('qg-sidebar', `:host{display:flex;width:60px;flex:none}.a{width:40px}.b{width:20px}.b .it{width:17px}.it{display:flex;align-items:center;justify-content:center;flex:none}.a .it{width:40px}.a .far{margin-left:10px}.a .it:first-child{margin-left:9px}`,
  () => `<div class="a">${spread(LEFT, 1, 183)}</div><div class="b">${spread([['dd', 320, 12], ['dd', 356, 12], ['dd', 428, 12], ['dd', 536, 12]], 1, 183)}</div>`);

/* ---------- layers panel ---------- */
const LAYERS = [
  ['boroughs_4269', 0, '#fff;border:1px dotted #bbb'], ['aoi-buffer-10ft', 0, '#b4dcfb;border:1px solid #5c7a90'], ['aoi-buffer-10ft copy', 1, '#d58fdb;border:1px solid #b24dba'],
  ['block groups % white', 0, 'poly', 'r'], ['block groups % white black', 1, 'poly', 'd'],
  ['0.000 - 0.200', 2, '#f7fcf5'], ['0.200 - 0.400', 2, '#c9eac3'], ['0.400 - 0.600', 2, '#7bc87c'], ['0.600 - 0.800', 2, '#2a924a'], ['0.800 - 1.000', 2, '#00441b'],
  ['block-groups-in-10ft-dissolved', 0, '#b4dcfb;border:1px solid #5c7a90'], ['block-groups-joined-nonzeropop-2...', 0, '#8e6692;border:1px solid #533a56'], ['Stamen Toner', 0, ''], ['OSM Standard', 0, '']];
define('qg-layers', `:host{display:flex;flex-direction:column;width:297px;flex:none}
.h{display:flex;height:23px;align-items:center;padding:0 3px 0 2px;justify-content:space-between}.h div{display:flex;gap:6px}
.tb{display:flex;height:33px;align-items:center}.tb .it{height:26px;margin-top:0}
.list{flex:1;background:#fcfcfc;border-top:1.500px solid #8e8e8e;border-left:1.500px solid #8e8e8e}
.row{display:flex;align-items:center;height:21px;color:#0a0a0a;font-weight:700;white-space:nowrap}.row.c{font-weight:400;color:#333}
.tri{width:26px;display:flex;justify-content:center;padding-right:3px}.c .tri{width:46px}.sw{width:16px;height:16px;margin-right:6px}.c .sw{width:18px;height:18px;margin-right:9px}${itemCss}`,
  () => `<div class="h"><span>Layers Panel</span><div><qg-icon name="float" size="11"></qg-icon><qg-icon name="close" size="11"></qg-icon></div></div>
<div class="tb">${spread([['<qg-icon name="brush" size="21"></qg-icon>', 16, 26, 'on'], ['<qg-icon name="addgrp" size="17"></qg-icon>', 44, 17], ['<qg-icon name="eye" size="17"></qg-icon>', 71, 17], ['dd', 83.500, 6], ['<qg-icon name="filter" size="17"></qg-icon>', 106, 17], ['<qg-icon name="epsf" size="17"></qg-icon>', 135, 17], ['ddg', 158, 10], ['<qg-icon name="expand" size="17"></qg-icon>', 183, 17], ['<qg-icon name="collapse" size="17"></qg-icon>', 210, 17], ['<qg-icon name="remove" size="17"></qg-icon>', 238, 17]])}</div>
<div class="list">${LAYERS.map(([t, s, f, tri]) => `<div class="row ${s === 2 ? 'c' : ''}"><div class="tri">${tri === 'r' ? '<svg width="8" height="10"><path d="M1 .8v8.400L7 5z" fill="#555" stroke="#333"/></svg>' : tri === 'd' ? '<svg width="10" height="8"><path d="M.8 1h8.400L5 7z" fill="#444" stroke="#333"/></svg>' : ''}</div><qg-check style="--gap:9px" ${s ? 'on' : ''}></qg-check>${f === 'poly' ? '<qg-icon name="poly" size="16" style="margin-right:6px"></qg-icon>' : f ? `<div class="sw" style="background:${f}"></div>` : ''}<span>${t}</span></div>`).join('')}</div>`);

/* ---------- map canvas ---------- */
const C = ['#f7fcf5', '#c9eac3', '#7bc87c', '#2a924a', '#00441b'];
function rng(a) { return () => { a = a + 0x6D2B79F5 | 0; let t = Math.imul(a ^ a >>> 15, 1 | a); t = t + Math.imul(t ^ t >>> 7, 61 | t) ^ t; return ((t ^ t >>> 14) >>> 0) / 4294967296; }; }
let clipId = 0;
/* Fills an outline with a rotated mosaic of blocks; weights are for [none, pale .. dark]. */
function mosaic(outline, w, h, angle, weights, seed, line = 'rgba(190,225,185,.38)') {
  const r = rng(seed), p = outline.trim().split(/\s+/).map(q => q.split(',').map(Number));
  const xs = p.map(q => q[0]), ys = p.map(q => q[1]);
  const cx = (Math.min(...xs) + Math.max(...xs)) / 2, cy = (Math.min(...ys) + Math.max(...ys)) / 2;
  const R = Math.hypot(Math.max(...xs) - cx, Math.max(...ys) - cy) + 10, id = 'm' + (++clipId);
  const sum = weights.reduce((a, b) => a + b); let out = '';
  for (let y = cy - R; y < cy + R;) {
    const hh = h * (.6 + r() * .9);
    for (let x = cx - R; x < cx + R;) {
      const ww = w * (.5 + r() * 1.3); let k = r() * sum, i = 0;
      while ((k -= weights[i]) > 0) i++;
      if (i) out += `<rect x="${x.toFixed(1)}" y="${(y + (r() - .5) * h * .5).toFixed(1)}" width="${ww.toFixed(1)}" height="${(hh * 1.15).toFixed(1)}" fill="${C[i - 1]}"/>`;
      x += ww;
    }
    y += hh;
  }
  return `<clipPath id="${id}"><polygon points="${rough(outline, 9, 4)}"/></clipPath><g clip-path="url(#${id})"><g transform="rotate(${angle} ${cx} ${cy})" stroke="${line}" stroke-width="1.300">${out}</g></g>`;
}
/* Subdivides an outline and displaces its points, for a street-cut edge. */
function rough(outline, step, amp) {
  const p = outline.trim().split(/\s+/).map(q => q.split(',').map(Number)), r = rng(p.length * 31 + p[0][0]); const out = [];
  p.forEach(([x, y], i) => { const [u, v] = p[(i + 1) % p.length], n = Math.max(1, Math.round(Math.hypot(u - x, v - y) / step));
    for (let k = 0; k < n; k++) { const j = k ? amp : amp / 3; out.push((x + (u - x) * k / n + (r() - .5) * 2 * j).toFixed(1) + ',' + (y + (v - y) * k / n + (r() - .5) * 2 * j).toFixed(1)); } });
  return out.join(' ');
}
const P = (c, ...s) => s.map(q => `<polygon points="${q}" fill="${C[c]}"/>`).join('');
const lines = s => s.trim().split('|').map(q => `<polyline points="${q}"/>`).join('');
const streets = s => `<g fill="none" stroke-linejoin="round" stroke-linecap="square"><g stroke="#ae2ab3" stroke-width="8.500">${lines(s)}</g><g stroke="#c56fca" stroke-width="2.400">${lines(s)}</g></g>`;
const blobs = s => `<g fill="#d192d6" stroke="#ae2ab3" stroke-width="3.800" stroke-linejoin="round">${s.trim().split('|').map(q => `<polygon points="${rough(q, 9, 3)}"/>`).join('')}</g>`;
define('qg-map', ':host{display:block;width:1116px;flex:none;background:#fff}svg{display:block}', () => {
  const north =
    P(0, '535,43 720,110 790,130 850,165 1045,225 1085,285 1010,425 945,350 945,560 1000,600 1055,660 1050,675 960,630 900,625 880,665 850,670 840,600 820,655 750,668 640,630 600,655 510,700 440,655 437,500 455,440 520,320 470,430 437,500 437,650 455,700 430,800 395,880 340,930 290,1000 265,1130 255,1185 225,1245 150,1262 100,1268 63,1245 75,1160 85,1100 105,1030 112,950 165,860 235,750 275,690 320,600 330,550 375,490 380,420 430,370 445,300 480,250 505,150',
      '320,1010 340,960 430,890 430,820 505,782 550,830 590,815 620,850 690,860 770,900 810,890 805,800 762,795 770,770 790,765 785,730 850,710 930,700 1040,725 1040,755 1120,770 1165,830 1215,900 1208,820 1230,800 1440,960 1450,1040 1420,1110 1330,1145 1330,1270 1000,1400 700,1500 400,1500 270,1300 285,1150 310,1060') +
    `<g fill="#fff"><path d="M955,1005l60,-10 25,12 -5,20 -80,0zM505,1040l25,-12 15,20 -5,50 -25,10 -8,-30zM705,1175l35,-20 15,30 -40,32zM575,880l12,-10 20,30 -20,20zM550,1080l20,-10 10,25 -20,12zM440,1000l60,-25 100,-5 -40,20 -100,10z"/><path d="M520,310L455,440 437,500 437,650 450,690" fill="none" stroke="#fff" stroke-width="9"/></g>`;
  const bronx =
    mosaic('490,380 530,330 590,240 700,250 640,330 660,450 600,500 590,600 520,680 445,650 442,500', 15, 13, 26, [5, 7, 7, 3.500, .5, .1], 12) +
    mosaic('560,340 650,370 670,470 760,450 830,470 825,650 760,660 620,610 560,640 530,520', 17, 15, 12, [4, 5, 5, 2.500, .3, 0], 17) +
    mosaic('445,545 530,500 605,530 590,620 520,690 440,655', 14, 12, 40, [0, 2, 6, 3, .2, 0], 19) +
    P(1, '650,330 690,290 712,245 715,400 700,455 665,450 670,370', '830,400 875,355 850,465 830,530 800,480 830,450', '545,300 590,280 640,310 620,330 560,330') +
    P(0, '730,375 780,370 830,380 828,430 790,450 730,440 718,410') + `<path d="M578,470l30,-15 35,20 -30,20 -20,12z" fill="#fff"/>` +
    P(4, '597,66 720,112 705,130 680,155 712,149 745,158 718,250 680,240 675,205 665,225 583,207 597,150', '465,258 490,265 495,280 525,278 530,292 500,285 480,300 455,318 441,302', '642,243 635,275 610,293 625,265') +
    P(2, '925,210 960,205 1042,225 1035,260 1020,300 1005,300 990,305 985,280 975,355 945,325 920,310 915,250', '925,210 1042,225 1020,295 990,308 975,290', '1055,238 1080,250 1085,290 1060,310 1040,370 1025,380 1015,420 1008,423 990,390 1000,350 1035,320 1040,270', '880,360 915,340 950,352 940,380 948,415 905,430 905,455 895,420 895,385') +
    mosaic('785,72 800,90 845,160 870,175 910,185 930,215 890,225 865,260 900,340 860,325 715,338 712,245 745,150 775,95', 17, 21, 22, [0, .6, 2, 5, 7, 1.500], 5) +
    mosaic('800,95 830,110 850,180 865,300 820,300 740,255 760,150', 19, 15, 22, [0, 0, .3, 1, 5, 8], 9) +
    mosaic('712,335 880,330 880,370 760,380 715,360', 22, 14, 5, [2, 5, 3, 1, 0, 0], 21) +
    mosaic('700,540 760,535 760,585 735,600 660,600 655,570', 20, 14, -8, [0, 0, 0, 4, 2, 0], 23) +
    mosaic('375,490 437,480 437,650 390,720 330,700 350,610 325,560', 14, 15, 28, [1, 2, 4, 5, 3, .6], 27) +
    mosaic('430,520 435,650 400,715 340,700 345,610 400,560', 12, 16, 28, [0, 0, 0, 2, 7, 1.500], 29) +
    mosaic('280,700 440,680 450,700 400,790 350,790', 14, 14, 28, [4, 3, 5, 2, 0, 0], 31) +
    P(2, '330,698 368,718 265,903 230,882', '480,690 505,698 522,728 505,765 490,790 460,808 426,790 430,765 468,742 462,705', '625,632 652,628 675,668 705,690 690,697 648,685 630,665', '515,685 540,665 558,680 535,708', '780,645 800,645 808,672 775,670', '655,570 700,590 745,640 720,640 670,605', '418,1025 450,1030 448,1060 415,1055', '408,1165 425,1160 425,1185 410,1185', '950,1058 970,1060 970,1085 950,1085', '415,918 440,912 440,930 425,935') +
    P(3, '615,718 635,710 660,725 690,745 708,765 700,780 670,782 635,772 615,748', '745,455 760,445 782,460 775,485 745,470', '418,842 440,845 440,862 420,860', '580,430 645,435 650,455 580,450', '655,568 700,562 698,585 665,588', '492,380 505,378 507,395 492,395', '1165,1125 1205,1122 1200,1150 1180,1150', '870,195 910,190 940,200 870,215', '872,245 910,250 905,272 875,268', '380,945 397,950 395,968 378,962', '905,565 920,580 915,600 905,590') +
    P(1, '695,900 700,870 720,868 760,915 775,935 695,940', '640,1200 672,1202 675,1232 635,1228', '1300,1020 1335,990 1365,990 1360,1000 1335,1015 1330,1090 1300,1090 1280,1055 1310,1045', '395,870 410,855 400,890 360,925', '895,630 925,570 930,620 905,635', '875,1095 895,1100 885,1112', '945,1115 970,1120 970,1135 948,1130', '530,945 545,942 540,965 525,965', '245,1060 270,1025 262,1060', '245,1155 262,1160 255,1185 240,1175', '1060,1165 1100,1115 1130,1130 1110,1185', '195,850 215,845 212,860 195,860', '330,910 350,905 345,920', '985,1120 1005,1120 1005,1145', '380,1210 405,1210 400,1222 380,1220', '150,1170 170,1165 165,1180', '190,1200 210,1200 205,1215') +
    P(2, '1190,1125 1245,1090 1255,1100 1215,1135', '1275,1070 1300,1065 1290,1090 1270,1085', '705,905 735,900 740,920 705,918') + P(4, '740,1055 760,1055 755,1068 738,1062') +
    mosaic('1130,1175 1180,1140 1290,1090 1320,1110 1300,1160 1130,1220 1090,1215', 26, 18, -20, [5, 3, 6, 1, .2, 0], 33);
  const south =
    P(0, '340,0 1395,0 1403,370 1330,400 1340,468 1305,470 1310,410 1200,335 1060,295 1000,310 935,300 968,418 835,425 740,480 700,550 650,560 697,618 655,612 720,655 745,760 735,790 700,798 545,620 520,610 472,635 520,690 565,755 500,750 508,810 430,815 240,842 160,815 152,795 190,775 240,780 210,715 125,655 150,600 108,570 100,610 115,640 75,648 40,600 22,540 40,450 75,400 150,330 210,270 140,295 125,260 165,180 210,120 280,90',
      '120,50 150,100 230,85 260,20 200,0 130,0', '468,930 540,885 620,880 635,895 720,855 745,890 850,840 900,815 935,795 910,765 850,780 740,850 665,860 620,885', '468,925 640,895 635,918 560,945 468,998', '985,590 1010,590 1008,620 985,690 930,700 935,685 965,680 985,640 975,610') +
    `<path d="M620,200l25,-25 20,30 -15,25zM225,345l45,-10 25,20 -5,50 -30,15 -40,-30zM535,0l230,0 50,20 -40,30 -10,38 -130,60 -60,-30 -35,-60z" fill="#fff" opacity=".75"/>` +
    P(1, '630,155 670,130 690,105 740,88 775,88 770,125 720,150 680,195 650,200 640,180', '695,38 735,30 735,65 695,60') +
    `<polygon points="${rough('70,425 120,380 150,330 215,268 230,290 160,370 110,400 95,440', 8, 4)}" fill="${C[1]}"/>` +
    mosaic('630,250 700,200 810,190 815,225 650,262', 24, 14, -18, [1, 2, 6, 2, 0, 0], 40) +
    P(2, '165,222 200,240 195,252 160,245', '270,712 298,712 298,730 275,722') +
    mosaic('265,92 330,115 410,120 415,150 360,170 330,200 300,150', 22, 14, 8, [4, 2, 4, 4, .8, 0], 41) +
    mosaic('250,180 300,190 290,210 250,200', 14, 10, 30, [3, 1, 2, 2, 0, 0], 42) +
    mosaic('500,100 560,110 620,120 640,190 620,220 560,150', 15, 17, 35, [2, 3, 5, 4, 0, 0], 43) +
    mosaic('330,195 380,190 380,260 345,240', 14, 17, 5, [3, 2, 4, 3, 1, 0], 45) +
    mosaic('335,390 380,370 420,480 480,530 440,560 370,500 350,450', 17, 14, 15, [3, 3, 4, 3, .5, 0], 47) +
    mosaic('412,105 500,112 560,150 600,190 645,232 700,248 810,225 835,300 810,340 832,385 830,422 780,445 745,478 720,505 690,547 650,545 600,520 568,500 568,575 545,615 510,585 480,545 440,525 400,480 372,400 380,330 370,260 390,170', 20, 12, 4, [0, .3, 1, 3, 6, 3], 49) +
    mosaic('430,190 560,190 640,260 500,300 400,250', 20, 11, -12, [0, 0, .2, 1, 4, 5], 50) +
    mosaic('375,260 440,250 500,280 490,340 380,350', 23, 13, -5, [0, 1, 2, 4, 4, 3], 51) +
    mosaic('430,280 490,275 498,320 440,310', 24, 12, -5, [0, 5, 4, 1, 0, 0], 52) +
    mosaic('520,240 600,240 655,330 720,360 735,420 690,547 650,545 568,500 568,530 450,520 395,420 380,350 500,330', 17, 20, 2, [0, 0, 0, 0, .6, 14], 53) +
    mosaic('560,440 610,370 700,350 740,380 745,475 690,547 600,515 562,490', 22, 13, -40, [0, 0, .1, .8, 2, 10], 55) +
    mosaic('640,260 800,240 812,290 700,360 650,330', 22, 13, -20, [0, 0, 1, 3, 6, 2.500], 57) +
    mosaic('480,525 560,500 570,575 545,615', 17, 17, 10, [0, 0, .3, 1, 6, 1], 59) +
    P(3, '735,345 790,325 830,380 830,422 785,445 775,400 760,415 780,455 755,472 735,440') + P(4, '812,268 828,265 833,305 812,305') +
    P(1, '568,490 610,520 650,545 600,555 570,540', '725,395 745,400 750,420 728,412') + P(2, '562,490 605,515 570,525') +
    `<path d="M557,418l48,-40 2,20 -47,40zM690,380l12,-6 6,10 -12,5z" fill="#fff"/>` +
    mosaic('950,175 1000,150 1050,130 1060,240 1040,260 1010,240', 20, 16, -25, [5, 3, 5, 1, 0, 0], 60) +
    mosaic('1010,210 1030,150 1050,100 1080,90 1120,110 1150,90 1190,100 1180,200 1150,290 1065,295 1050,280 1040,250', 20, 16, -25, [.3, 1, 4, 6, 3, .2], 61) +
    mosaic('1090,130 1130,95 1190,90 1200,200 1140,270 1080,290 1100,230', 20, 14, -25, [0, 0, 1, 2, 6, 2], 63) +
    P(4, '1130,85 1165,68 1190,90 1187,65 1220,50 1300,30 1380,0 1393,40 1400,210 1390,290 1403,372 1330,395 1300,408 1200,335 1110,300 1065,297 1155,290 1100,190 1190,150 1190,95') +
    mosaic('1100,110 1165,72 1190,95 1190,150 1110,190', 20, 14, -25, [0, 0, .3, 1, 5, 3], 64) +
    mosaic('1185,65 1240,45 1390,20 1400,230 1250,230', 26, 9, 14, [0, 0, 0, .1, .3, 14], 65, 'rgba(150,190,150,.42)') +
    mosaic('1185,70 1260,240 1240,350 1150,300 1105,200 1190,150', 12, 26, -32, [0, 0, 0, .1, .3, 14], 67, 'rgba(150,190,150,.42)') +
    mosaic('1250,225 1400,230 1403,372 1330,390 1230,345', 13, 23, -14, [0, 0, 0, 0, .3, 14], 68, 'rgba(150,190,150,.42)') +
    mosaic('1200,30 1390,0 1393,38 1260,60 1200,50', 27, 17, -15, [0, 0, .3, 1, 7, 1], 69) +
    P(2, '1188,150 1215,142 1228,160 1207,192 1190,175', '1305,340 1315,300 1350,295 1325,320') + P(3, '1110,258 1135,255 1160,290 1070,292', '1195,325 1250,340 1290,375 1310,375 1303,410 1270,390', '1320,345 1335,350 1350,385 1320,380', '1300,125 1322,122 1312,150', '1240,105 1260,102 1255,120', '1370,270 1390,265 1390,290 1370,290') +
    `<path d="M1305,162l58,18 -5,20 -62,-20z" fill="#fff"/>` + P(0, '1310,382 1338,380 1335,430 1340,468 1322,450 1307,470 1312,430') +
    mosaic('915,795 1010,745 1045,710 1100,720 1150,722 1100,748 1030,765 940,802', 24, 18, -20, [0, 1, 6, 2, 0, 0], 70) +
    P(1, '1150,660 1165,620 1190,618 1180,665 1150,690', '1205,600 1250,610 1240,680 1205,680') + P(0, '1280,610 1315,605 1345,655 1350,700 1310,700 1285,720') +
    mosaic('1060,705 1100,690 1190,685 1280,690 1285,722 1190,725 1100,748 1050,735', 25, 15, -5, [0, 0, .6, 4, 6, 1], 71) +
    mosaic('1192,595 1240,590 1285,615 1280,690 1210,680', 24, 20, 8, [0, 0, 5, 4, .6, 0], 73) +
    P(3, '1095,690 1100,660 1130,640 1135,655 1115,710 1095,715', '1100,738 1185,715 1285,710 1285,722 1190,725 1100,746') + P(4, '1060,685 1070,676 1095,675 1090,695 1065,698', '1210,682 1225,682 1225,705 1210,705', '1235,685 1250,685 1250,705 1235,705') + P(2, '1192,592 1230,590 1258,610 1255,625 1225,612 1195,608') +
    mosaic('195,775 248,792 250,830 198,832', 20, 14, 8, [0, 1, 3, 5, .8, 0], 75) + P(3, '468,680 488,680 488,705 468,705') + P(1, '248,815 275,805 265,825');
  const island =
    P(0, '315,168 400,110 440,135 500,150 600,140 780,95 850,125 870,160 872,230 905,300 937,352 890,435 772,562 722,525 690,555 755,582 715,635 678,670 612,618 565,665 575,680 553,695 548,740 520,745 465,790 392,832 372,825 300,875 255,880 210,928 150,935 95,965 78,962 55,925 52,895 68,858 95,850 112,830 112,760 90,692 170,630 230,625 250,590 278,435 318,375 315,280 290,270 295,200') +
    P(1, '313,168 345,132 388,110 392,125 405,113 425,130 445,150 440,248 408,243 390,222') +
    mosaic('425,130 470,145 500,155 560,150 560,180 540,228 440,225', 32, 26, 4, [.3, 1, 6, 2, 0, 0], 81) +
    P(0, '500,180 535,165 530,205 505,210', '555,175 590,180 600,210 565,225') +
    P(3, '424,130 437,133 436,162 422,158', '447,140 470,143 468,196 446,196') + P(2, '437,137 450,140 448,163 437,163', '470,148 500,155 540,148 598,138 600,148 530,170 500,178 470,172', '443,200 468,198 465,238 441,235', '615,142 680,124 675,160 655,175 658,188 600,196 605,185 628,182') +
    P(1, '680,124 690,155 702,155 702,173 650,172', '645,220 655,210 673,238', '462,328 488,292 514,317', '792,362 800,340 830,340 835,365', '795,392 815,380 835,400 818,417') +
    mosaic('735,140 800,140 840,120 870,155 872,215 835,225 820,160 770,180', 23, 20, -8, [2, 2, 4, 4, .5, 0], 83) +
    P(1, '735,260 775,215 820,160 830,180 828,235 850,245 820,328 785,305 790,280 760,268') + P(2, '840,155 868,155 872,215 832,218', '730,110 788,96 798,140 780,175 762,165 768,150 735,135', '790,290 815,240 840,270 815,325 785,305') + P(3, '815,97 825,98 842,112 830,122 815,115', '795,268 812,268 820,248 840,270 810,285') + P(4, '795,130 810,150 788,155') + P(2, '640,322 653,322 653,335 640,335');
  const stripsN = '780,140 760,180 737,240|825,245 810,262 793,270|598,433 620,440 643,455|660,538 692,534|720,522 746,513|616,560 615,588|1055,375 1063,400 1075,435|1083,465 1088,482|887,503 930,565|937,585 938,588|320,600 330,630 285,690|310,650 335,625 295,695|375,675 403,628|317,700 308,705|255,770 235,838|258,795 230,812|378,808 365,850 348,880|490,885 512,905 530,885|467,912 515,940|485,908 510,922|462,942 490,960|818,785 817,812|715,943 757,941|860,770 862,780|1137,893 1153,935|1305,852 1282,885|1063,940 1072,940|605,1122 620,1110|805,1148 845,1165|870,1180 903,1202|1055,1122 1112,1100|1075,1202 1105,1192|1383,1065 1415,1056|1385,1010 1397,1000|350,1015 346,1030|385,505 405,475|545,400 560,385 535,390|480,640 505,660|487,600 530,615 525,585|545,235 575,250 560,260 580,212|562,90 561,97|535,208 538,212|457,382 430,420|630,385 650,390 635,375|718,385 735,388|878,425 885,450|118,1055 130,1085 150,1110|122,1060 120,1100|320,910 318,920|345,1158 305,1210|300,1182 338,1200|1180,1155 1193,1150|1275,1170 1292,1167|1440,970 1442,972|1207,990 1205,998|110,1115 112,1120|155,1180 153,1190|135,1225 138,1228|655,240 668,228|530,845 545,835 515,858|1010,1255 1065,1230|455,325 510,310 490,330|460,330 465,355 475,345|112,1042 140,1035 153,1018|130,1020 125,1045|165,1090 182,1055 195,1020|75,1195 90,1175 100,1152|80,1180 108,1178 118,1165|138,1120 165,1145 200,1110|165,1160 175,1140|190,1165 215,1140 230,1100|200,1100 215,1095|240,1100 238,1130 215,1138|212,1028 240,1010 250,990|228,940 240,955 232,970|168,990 182,982|195,990 212,996|345,635 365,640 345,660|395,705 435,728|365,772 378,752';
  const blobsN = '580,340 620,337 625,355 595,365 575,375 565,358|410,405 432,405 440,430 425,445 415,465 408,430|905,305 918,308 912,325 890,345 882,330|775,490 795,492 798,525 785,510|715,325 735,312 742,328 718,340|565,300 600,315 595,322 570,310|338,660 355,640 362,680 340,690|400,705 425,710 430,725 405,718|385,730 400,730 378,772 370,768|335,820 358,825 340,880 320,868|180,892 195,890 200,930 182,935|208,900 232,905 220,948 195,940|290,900 295,930 303,950 270,985 248,980 265,945|605,993 680,982 682,997 610,1008 572,1010 575,1000|665,935 690,930 697,945 665,952 632,958 650,945|865,910 885,905 905,935 890,950 900,975 858,948|918,970 955,952 935,985|1105,808 1122,802 1125,820 1108,828|950,765 975,760 977,773 965,766|690,1065 725,1072 720,1080 695,1078|738,1080 765,1110 740,1110|328,1075 347,1075 352,1105 368,1135 350,1108 325,1100|188,1025 200,1045 200,1062 178,1072|185,1110 205,1100 200,1125 180,1140|498,465 518,470 505,482|946,908 957,908 955,918|220,875 235,880 225,892|655,1025 675,1040 660,1038|220,1115 240,1105 245,1125 222,1140';
  const stripsS = '780,152 830,142 870,130 910,127 925,112|915,205 965,180 1000,168 1028,148|1133,33 1165,22|685,225 780,190|770,226 817,215|897,303 912,375|912,383 914,392|128,260 160,222|135,452 195,376|95,465 70,548|165,572 187,542|220,605 265,545|190,625 255,680|290,695 335,688|367,683 460,670 466,695|377,665 378,722|367,585 373,630 405,614 355,638|370,572 405,567|343,437 355,505|345,445 370,432|362,520 363,545 375,528|378,327 390,385 395,430 435,480 437,500|365,385 400,385|425,200 424,275|415,208 438,212|395,225 400,250 395,262|362,215 370,255|345,210 342,235|326,140 380,136|370,158 403,155 402,170 370,175|305,178 345,165|240,165 228,200|250,168 230,215|293,235 273,268|283,295 277,308|292,328 288,338|225,505 233,440|228,485 270,437|255,515 295,465|283,520 325,487 305,500|290,435 315,420 302,432|275,610 290,590 298,602 280,612|320,650 345,645 330,645 328,658|403,742 415,748 425,765 440,765|370,778 382,775 380,800|342,810 400,796|376,780 378,812|480,545 513,580|497,378 525,375|510,365 512,395|685,342 700,368|628,408 640,427|645,467 662,452|688,480 698,495|1315,228 1342,237|1235,148 1248,147|1240,150 1242,153|1102,175 1106,185|1113,252 1123,252|1355,297 1358,302|985,765 1028,745|1004,735 1006,738|910,772 915,788 930,782|588,595 587,603|535,152 550,165|230,85 268,80|930,10 962,30|1273,632 1280,660|1275,685 1278,690|245,810 248,810|565,520 573,525|495,115 508,120|195,56 196,57|162,76 163,77|229,129 230,130|193,187 194,188';
  const blobsS = '556,108 590,92 635,98 610,108|492,70 515,75 500,85|535,65 550,58 550,75|1275,655 1297,655 1280,668|275,802 305,815 298,825 285,820|232,82 262,78 268,88|1015,80 1040,75 1055,98 1030,92|1072,82 1120,62 1095,78|132,30 150,0 165,10';
  const stripsI = '590,150 576,180|592,300 618,298|628,297 642,297|685,204 705,199|717,197 730,195|865,263 886,302|830,202 840,228|730,420 728,432 713,448|773,437 745,474|720,500 712,512|655,519 690,543 700,525|447,425 455,420|374,385 382,379|398,362 404,360|222,820 233,804|147,784 158,785|288,795 293,796|325,760 331,754|392,700 398,712|447,685 457,705|512,730 522,721|510,660 518,648|220,633 221,637|242,646 245,648|430,600 438,602|832,120 834,135 839,160|818,157 838,152|680,478 682,479|446,216 468,218|475,293 485,305';
  const blobsI = '439,458 467,463 458,485 455,500 445,502 430,492|680,550 692,562 668,585 663,575|465,677 475,683 468,692|556,225 580,216 606,220 580,228 560,242|470,292 485,292 490,308 472,318';
  return `<svg width="1116" height="839" viewBox="363 183 1116 839"><g transform="translate(840 190) scale(.33333)">
<g>${north}</g><g transform="translate(-60 1170)">${south}</g><g>${bronx}</g><g transform="translate(-1020 1470)">${island}${streets(stripsI)}${blobs(blobsI)}</g>
<g>${streets(stripsN)}${blobs(blobsN)}<path d="M335,655l25,-5 0,30 -20,5zM195,935l15,0 0,15 -15,0zM890,318l15,-8 5,10 -18,18zM868,925l20,-8 10,20 -18,12z" fill="#8e6692"/></g>
<g transform="translate(-60 1170)">${streets(stripsS)}${blobs(blobsS)}<path d="M558,282L598,254L602,270L630,283L602,286L605,314L598,312L592,280Z" fill="#6a2a78" stroke="#9c2ba4" stroke-width="3"/></g></g></svg>`;
});

/* ---------- layer styling dock ---------- */
define('qg-styling', `:host{display:flex;flex-direction:column;width:441px;flex:none;position:relative;overflow:hidden;margin-top:1px}
.frame{position:absolute;left:.5px;top:0;width:438px;height:835px;border:4.500px solid #e73022;pointer-events:none}
.inner{width:435px;display:flex;flex-direction:column;height:807px;padding-left:10px}
.r{display:flex;align-items:center;flex:none;white-space:nowrap}
.body{display:flex;margin-top:8px;flex:1}.side{width:38px;margin-right:4px;display:flex;flex-direction:column}
.top{height:38px;display:flex;align-items:center;justify-content:center;padding-left:4px}.dark{flex:1;background:#595959;display:flex;flex-direction:column;align-items:center;padding-top:8px;gap:13px}
.col{flex:1;display:flex;flex-direction:column;min-width:0}.area{display:flex;height:407px;margin:8px 0 0 8px}.in{width:354px;display:flex;flex-direction:column}
.tree{width:248px;height:100px;background:#fcfcfc;border-top:1px solid #888;border-left:1px solid #888;color:#222}
.sel{display:flex;height:19px;align-items:center;background:linear-gradient(#5aa5f7,#3d8fe9);border-top:1px solid #2c74c8;border-bottom:1px solid #2c74c8;color:#fff;font-weight:700;padding-left:8px}
.sub{display:flex;height:19px;align-items:center;padding-left:43px}.sq{width:16px;height:16px;background:#b4dcfb;border:1px solid #5c7a90;margin-right:6px;flex:none}
.sep{height:2px;background:#999;border-bottom:1px solid #f2f2f2;flex:none}
.bar{width:15px;background:linear-gradient(90deg,#f8f8f8,#e9e9e9 20%,#fdfdfd);border-radius:6px;padding:12px 3px 0}.bar div{width:9px;border:1px solid #8c8c8c;border-radius:5px;background:#d7d7d7}
.list{height:76px;background:#fcfcfc;border-top:1.500px solid #888;border-left:1.500px solid #888;display:flex;overflow:hidden;color:#222}
.sy{width:51px;margin:6px 0 0 8px;flex:none}.sy div{width:48px;height:48px;border:1px solid #b9bd94;background:#eff2c6}.sy span{display:block;width:50px;overflow:hidden;line-height:16px;margin-top:5px;white-space:nowrap;font-size:12.200px}.sy .m{text-align:center;padding-right:2px}
.tabs{display:flex;margin:3px 0 0 7px;height:29px;border-top:1px solid #9c9c9c}.tab{display:flex;align-items:center;padding:0 9px 2px;height:26px;white-space:nowrap}.cur{background:#dcdcdc;border:1px solid #a5a5a5;border-top:0;border-radius:0 0 3px 3px;height:29px;padding:0 7px 3px}`,
  () => `<div class="inner">
<div class="r" style="height:23px"><span style="flex:1;margin-left:-1px">Layer Styling</span><qg-icon name="float" size="11"></qg-icon><qg-icon name="close" size="11" style="margin-left:6px;margin-right:-3px"></qg-icon></div>
<qg-combo style="margin:4px 0 0 1px;--g:3px"><qg-icon name="poly" size="17"></qg-icon><span>block-groups-in-10ft-dissolved</span></qg-combo>
<div class="body"><div class="side"><div class="top"><qg-icon name="style" size="28"></qg-icon></div><div class="dark"><qg-icon name="label" size="27"></qg-icon><qg-icon name="masks" size="30" style="margin-top:-3px"></qg-icon><qg-icon name="hist" size="25"></qg-icon></div></div>
<div class="col">
<qg-combo style="padding-left:7px"><qg-icon name="inv" size="14"></qg-icon><span>Inverted polygons</span></qg-combo>
<div class="r" style="margin:17px 7px 0 8px"><span style="flex:1">Sub renderer:</span><qg-combo style="width:179px;padding-left:7px;--g:3px"><qg-icon name="single" size="14"></qg-icon><span>Single symbol</span></qg-combo></div>
<div class="r" style="height:19px;margin:8px 0 0 11px"><qg-check>Merge polygons before rendering (slow)</qg-check></div>
<div class="area"><div class="in">
<div class="r" style="height:100px;align-items:flex-start"><div class="tree"><div class="sel"><svg width="9" height="8" style="margin-right:6px"><path d="M.8 1h7.400L4.500 7z" fill="#333" stroke="#123"/></svg><div class="sq" style="background:#8fc1ef"></div>Fill</div><div class="sub"><div class="sq"></div>Simple fill</div></div><div style="margin:20px 0 0 26px;width:61px;height:61px;background:#b4dcfb;border:1px solid #000"></div></div>
<div class="r" style="margin:7px 0 0 1px;gap:8px">${['add', 'minus', 'lock', 'dup', 'up', 'dn'].map((n, i) => `<qg-btn style="width:34px" ${i ? 'off' : ''}><qg-icon name="${n}" size="17"></qg-icon></qg-btn>`).join('')}</div>
<div class="sep" style="margin-top:7px"></div>
<div class="r" style="margin-top:8px"><span style="width:99px">Unit</span><qg-combo style="width:254px">Millimeter</qg-combo></div>
<div class="r" style="height:23px"><span style="width:101px">Transparency 0%</span><qg-slider style="width:251px"></qg-slider></div>
<div class="r"><span style="width:99px">Color</span><qg-btn style="width:234px;height:26px"><div style="width:226px;height:16px;background:#b4dcfb;border-radius:2px"></div></qg-btn><qg-btn style="width:18px;height:26px;margin-left:2px"><qg-icon name="dd" size="20" style="margin:2px -2px 0"></qg-icon></qg-btn></div>
<div class="sep" style="margin-top:70px"></div>
<div class="r" style="margin-top:6px"><span style="width:104px">Symbols in group</span><qg-input kind="drop" style="width:154px"></qg-input><qg-btn style="width:90px;margin-left:5px">Open Library</qg-btn></div>
<div class="list" style="margin-top:5px"><div class="sy"><div style="background:linear-gradient(135deg,#555a35 3px,transparent 3px),linear-gradient(225deg,#555a35 3px,transparent 3px),linear-gradient(45deg,#555a35 3px,transparent 3px),linear-gradient(315deg,#555a35 3px,transparent 3px),#eff2c6"></div><span class="m">corners</span></div><div class="sy"><div style="background:#a4bddc;border-color:#8299b5"></div><span>diagonal</span></div><div class="sy"><div style="background:radial-gradient(circle,#96704e 1px,transparent 1.400px) 0 0/11px 8px,radial-gradient(circle,#96704e 1px,transparent 1.400px) 5.500px 4px/11px 8px,#eff2c6"></div><span class="m">dotted</span></div><div class="sy"><div style="background:#bbde6a;border-color:#9aba53"></div><span class="m">green</span></div><div class="sy"><div></div><span class="m">land</span></div><div class="bar" style="margin-left:auto;height:76px"><div style="height:40px"></div></div></div>
</div><div class="bar"><div style="height:349px"></div></div></div>
<div class="r" style="height:21px;margin:14px 0 0 2px;font-weight:700"><svg width="11" height="9" style="margin:3px 8px 0 -1px"><path d="M.8 1h9.400L5.500 8z" fill="#333"/></svg>Layer rendering</div>
<div class="r" style="margin:6px 0 0 7px"><span style="width:142px">Layer transparency</span><qg-slider style="width:178px"></qg-slider><qg-input kind="spin" style="width:46px;margin-left:9px;--pl:5px">0</qg-input></div>
<div class="r" style="margin:8px 0 0 7px"><span style="width:140px">Layer blending mode</span><qg-combo style="width:87px">Normal</qg-combo></div>
<div class="r" style="margin:8px 0 0 7px"><span style="width:140px">Feature blending mode</span><qg-combo style="width:87px">Normal</qg-combo></div>
<div class="r" style="margin:8px 1px 0 10px;justify-content:space-between"><qg-check>Draw effects</qg-check><qg-btn off style="width:20px;height:22px"><qg-icon name="star" size="17"></qg-icon></qg-btn></div>
<div class="r" style="margin:8px 1px 0 10px;justify-content:space-between"><qg-check>Control feature rendering order</qg-check><qg-btn off style="width:20px;height:22px"><qg-icon name="az" size="17"></qg-icon></qg-btn></div>
<div class="r" style="margin-top:19px"><qg-btn style="width:20px;height:22px"><qg-icon name="undo2" size="13"></qg-icon></qg-btn><qg-btn style="width:20px;height:22px;margin-left:8px"><qg-icon name="redo2" size="13"></qg-icon></qg-btn><qg-check on style="margin-left:154px">Live update</qg-check><qg-btn style="width:87px;margin-left:auto;margin-right:-6px;padding-right:4px">Apply</qg-btn></div>
</div></div></div>
<div class="tabs"><div class="tab">Processing Toolbox</div><div class="tab cur">Layer Styling</div></div><div class="frame"></div>`);

define('qg-status', `:host{display:flex;height:32px;align-items:center;border-top:1px solid #b5b5b5;padding-left:864.500px;flex:none;white-space:nowrap}`,
  () => `<span style="width:68px">Coordinate</span><qg-input kind="mid" style="width:253px">932139,232389</qg-input><qg-icon name="mouse" size="16" style="margin-left:4px"></qg-icon><span style="width:34px;margin-left:12px">Scale</span><qg-input kind="drop" style="width:105px">1:220,508</qg-input><qg-icon name="plock" size="15" style="margin-left:5px"></qg-icon><span style="width:59px;margin-left:13px">Magnifier</span><qg-input kind="spin" style="width:77px;--pl:5px">100%</qg-input><span style="width:58px;margin-left:11px">Rotation</span><qg-input kind="spin" style="width:77px;--pl:5px">0.0</qg-input><qg-check on style="margin-left:11px">Render</qg-check><qg-icon name="crs" size="15" style="margin-left:18px"></qg-icon><span style="width:112px;margin-left:5px">EPSG:2263 (OTF)</span><qg-icon name="msg" size="17" style="margin-left:auto;margin-right:11px"></qg-icon>`);

define('qgis-app', `:host{display:flex;flex-direction:column;width:1920px;height:1055px;font:12px/16px "Noto Sans",sans-serif;color:#3c3c3c;background:#cecece;overflow:hidden}
.main{display:flex;height:840px;flex:none}
.split{width:6px;flex:none;background:repeating-conic-gradient(#f2f2f2 0 25%,#c4c4c4 0 50%) 0 0/3px 3px;border-right:1px solid #8e8e8e}`,
  () => `<qg-titlebar></qg-titlebar><qg-menubar></qg-menubar><qg-toolbar bar="a" style="height:39px"></qg-toolbar><qg-toolbar bar="b" style="height:46px"></qg-toolbar><qg-toolbar bar="c" style="height:41px"></qg-toolbar>
<div class="main"><qg-sidebar></qg-sidebar><qg-layers></qg-layers><div class="split"></div><qg-map></qg-map><qg-styling></qg-styling></div><qg-status></qg-status>`);
</script>
</body>
</html>
